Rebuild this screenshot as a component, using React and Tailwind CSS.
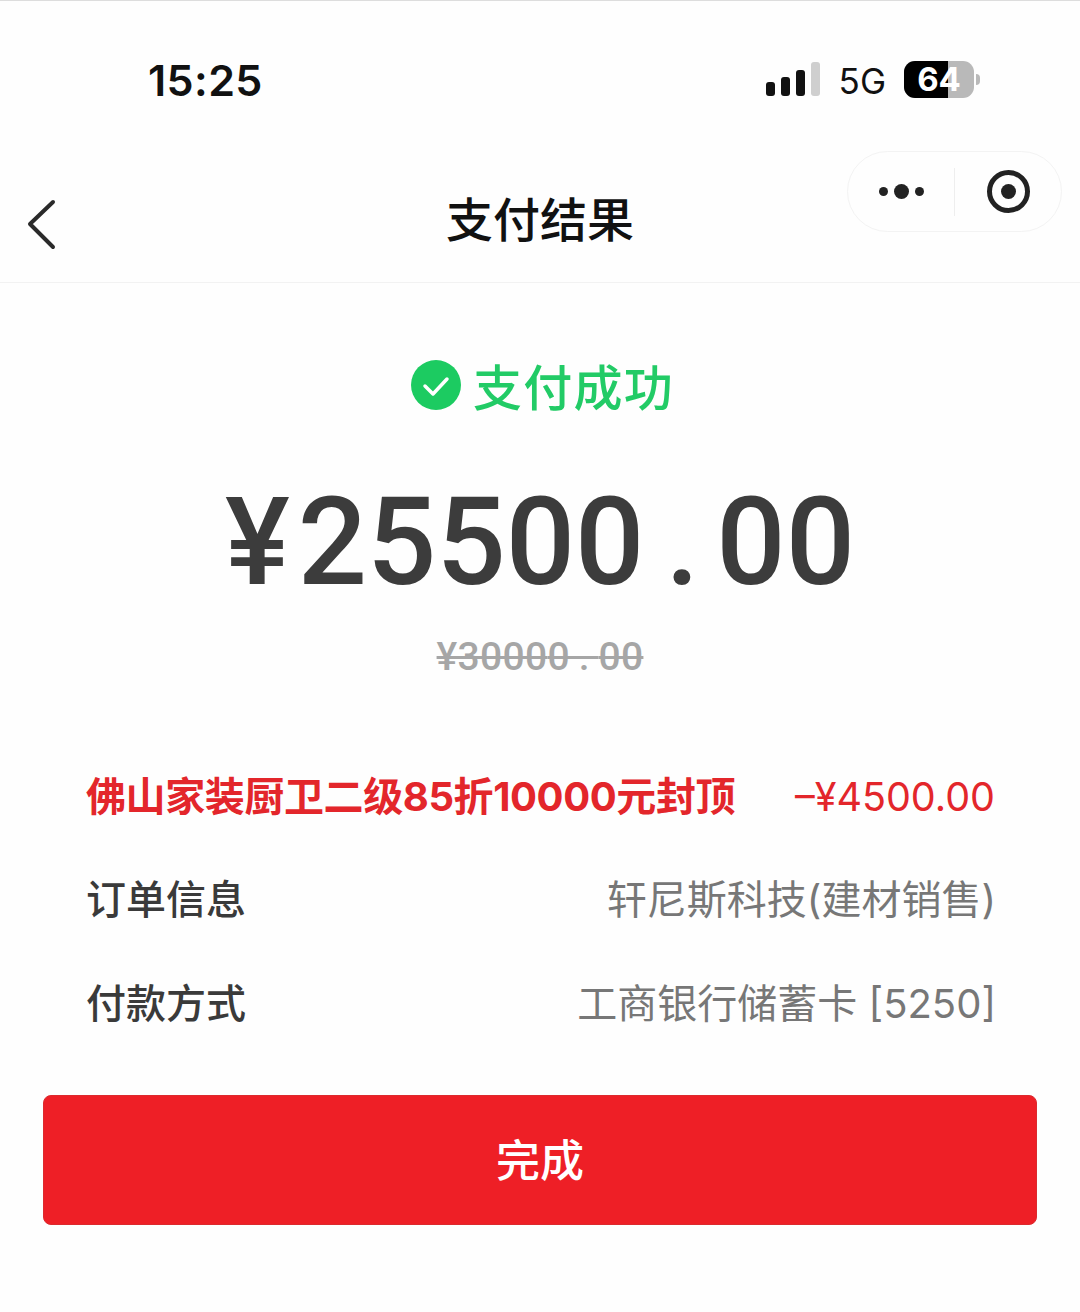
const cjk = "font-['Noto_Sans_CJK_SC','Noto_Sans',sans-serif]"
const mixed = "font-['Inter','Noto_Sans_CJK_SC',sans-serif]"

const StatusBar = () => (
  <div className="h-[150px] flex items-start justify-between pt-[54px] pl-[148px] pr-[100px]">
    <span className="font-['Inter',sans-serif] text-[43px] leading-[50px] font-semibold text-[#111] tracking-[0.4px]">15:25</span>
    <div className="flex items-center gap-[18px] mt-[3px] pt-[6px] h-[36px]">
      <div className="flex items-end gap-[6px] mr-[1px]">
        <div className="w-[9px] h-[14px] rounded-[3px] bg-[#111]" />
        <div className="w-[9px] h-[19px] rounded-[3px] bg-[#111]" />
        <div className="w-[9px] h-[26px] rounded-[3px] bg-[#111]" />
        <div className="w-[9px] h-[34px] rounded-[3px] bg-[#cfcfcf]" />
      </div>
      <span className="font-['Inter',sans-serif] text-[35px] leading-[36px] text-[#111] mt-[4px]">5G</span>
      <div className="flex items-center gap-[2px]">
        <div className="relative w-[70px] h-[37px] rounded-[11px] bg-[#b9b9b9] flex items-center justify-center">
          <div className="absolute left-0 top-0 bottom-0 w-[44px] rounded-l-[11px] bg-black" />
          <span className="relative font-['Inter',sans-serif] text-[33px] leading-[37px] font-bold text-white">64</span>
        </div>
        <div className="w-[4px] h-[11px] rounded-r-full bg-[#b9b9b9]" />
      </div>
    </div>
  </div>
)

const Header = () => (
  <div className="relative h-[132px] border-b border-[#f2f2f2] flex items-center justify-center">
    <svg className="absolute left-[26px] top-[48px]" width="32" height="52" viewBox="0 0 32 52" fill="none">
      <path d="M27 3 L4 25 L27 48" stroke="#2a2a2a" strokeWidth="4" strokeLinecap="round" strokeLinejoin="round" />
    </svg>
    <span className={`${cjk} text-[47px] leading-[60px] font-medium text-[#111]`}>支付结果</span>
    <div className="absolute left-[847px] top-0 w-[215px] h-[81px] rounded-full border border-[#f3f3f3] flex items-center">
      <div className="flex-1 flex items-center justify-center gap-[6px]">
        <div className="w-[9px] h-[9px] rounded-full bg-[#222]" />
        <div className="w-[15px] h-[15px] rounded-full bg-[#222]" />
        <div className="w-[9px] h-[9px] rounded-full bg-[#222]" />
      </div>
      <div className="w-px h-[48px] bg-[#eeeeee]" />
      <div className="flex-1 flex items-center justify-center">
        <div className="w-[43px] h-[43px] rounded-full border-[5px] border-[#222] flex items-center justify-center">
          <div className="w-[15px] h-[15px] rounded-full bg-[#222]" />
        </div>
      </div>
    </div>
  </div>
)

const Row = ({ label, value }) => (
  <div className="h-[104px] flex items-center justify-between">
    <span className={`${cjk} text-[40px] leading-[56px] font-medium text-[#3a3a3a]`}>{label}</span>
    <span className={`${mixed} text-[40px] leading-[56px] font-normal text-[#777] mt-[6px] -mr-[2px]`}>{value}</span>
  </div>
)

export default function App() {
  return (
    <div className="min-h-[1312px] w-[1080px] bg-[#fefefe] border-t border-[#dddddd] box-border">
      <StatusBar />
      <Header />

      <div className="h-[106px] mt-[49px] ml-[5px] flex items-center justify-center gap-[12px]">
        <svg width="50" height="50" viewBox="0 0 50 50">
          <circle cx="25" cy="25" r="25" fill="#1ccb61" />
          <path d="M14 26 L22 34 L36 19" fill="none" stroke="#fff" strokeWidth="3.5" strokeLinecap="round" strokeLinejoin="round" />
        </svg>
        <span className={`${cjk} text-[49px] leading-[60px] font-medium text-[#22cb66] tracking-[1.2px]`}>支付成功</span>
      </div>

      <div className="flex justify-center h-[140px] mt-[35px] items-center">
        <span className="font-['Roboto',sans-serif] text-[122px] leading-[140px] font-medium text-[#3c3c3c]">
          <span className="mr-[8px]">¥</span>25500<span className="ml-[21px] mr-[17px]">.</span>00
        </span>
      </div>

      <div className="flex justify-center mt-[19px] h-[50px] items-center">
        <span className="font-['Roboto',sans-serif] text-[39px] leading-[50px] font-medium text-[#a6a6a6] line-through tracking-[0.3px]">
          ¥3000<span className="tracking-[9px]">0.</span>00
        </span>
      </div>

      <div className="px-[86px] mt-[87px]">
        <div className="h-[56px] flex items-center justify-between">
          <span className={`${mixed} text-[40px] leading-[56px] font-bold text-[#e3262b] tracking-[-0.4px]`}>佛山家装厨卫二级85折10000元封顶</span>
          <span className={`${mixed} text-[39.5px] leading-[56px] text-[#e3262b] -mr-[1px]`}>–¥4500.00</span>
        </div>
        <div className="mt-[20px]">
          <Row label="订单信息" value="轩尼斯科技(建材销售)" />
          <Row label="付款方式" value="工商银行储蓄卡 [5250]" />
        </div>
      </div>

      <button className={`${cjk} block mx-[43px] mt-[42px] pb-[5px] w-[994px] h-[130px] rounded-[8px] border border-[#dc2a2e] bg-[#ee1f26] text-white text-[44px] font-medium`}>完成</button>
    </div>
  )
}
